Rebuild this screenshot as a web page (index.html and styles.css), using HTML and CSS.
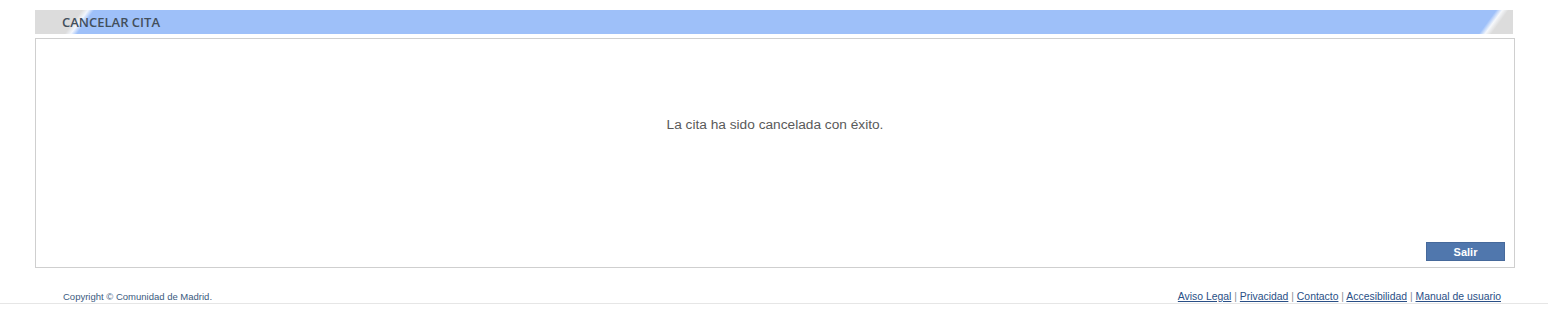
FILE: index.html
```html
<!DOCTYPE html>
<html lang="es">
<head>
  <meta charset="UTF-8" />
  <title>Cancelar cita</title>
  <link rel="stylesheet" href="styles.css">
</head>
<body>
  <div class="page">
    <div class="titulo">CANCELAR CITA</div>

    <div class="caja">
      <p class="mensaje">La cita ha sido cancelada con éxito.</p>
      <div class="acciones">
        <button type="button" class="boton">Salir</button>
      </div>
    </div>
  </div>

  <div class="pie">
    <span class="copy">Copyright © Comunidad de Madrid.</span>
    <span class="enlaces">
      <a href="#">Aviso Legal</a> | <a href="#">Privacidad</a> | <a href="#">Contacto</a> | <a href="#">Accesibilidad</a> | <a href="#">Manual de usuario</a>
    </span>
  </div>
</body>
</html>
```

FILE: styles.css
```css
body {
  margin: 0;
  background: #fff;
  font-family: "Liberation Sans", Arial, sans-serif;
}

.page {
  padding: 10px 33px 0 35px;
}

/* barra de titulo con los cortes en diagonal */
.titulo {
  height: 24px;
  line-height: 24px;
  padding-left: 27px;
  font-family: "Open Sans", "Liberation Sans", sans-serif;
  font-size: 13px;
  font-weight: 600;
  color: #434f5c;
  background-color: #9ec0f9;
  background-image:
    linear-gradient(126deg, #dcdcdc 0, #dcdcdc 38px, #f2f6fd 43px, #9ec0f9 48px),
    linear-gradient(126deg, #9ec0f9 0, #9ec0f9 35px, #f6f8fb 40px, #dcdcdc 45px);
  background-size: 70px 100%, 60px 100%;
  background-position: left top, right top;
  background-repeat: no-repeat;
  margin-right: 2px;
}

.caja {
  margin-top: 4px;
  border: 1px solid #cfcfcf;
  height: 228px;
  display: flex;
  flex-direction: column;
}

.mensaje {
  margin: 78px 0 0 0;
  text-align: center;
  font-size: 13.7px;
  line-height: 16px;
  color: #5a5a5a;
}

.acciones {
  margin-top: auto;
  display: flex;
  justify-content: flex-end;
  padding: 0 9px 6px 0;
}

.boton {
  width: 79px;
  height: 19px;
  padding: 0;
  background: #5077ad;
  border: 1px solid #46699b;
  color: #fff;
  font-family: "Liberation Sans", Arial, sans-serif;
  font-size: 11px;
  font-weight: bold;
  cursor: pointer;
}

.pie {
  margin-top: 22px;
  display: flex;
  justify-content: space-between;
  align-items: baseline;
  padding: 0 47px 0 63px;
  border-bottom: 1px solid #e6e6e6;
  font-size: 10.4px;
  line-height: 13px;
  color: #8a8f99;
}

.copy {
  font-size: 9.5px;
  color: #3b5a80;
}

.enlaces a {
  color: #2a4f86;
}
```
